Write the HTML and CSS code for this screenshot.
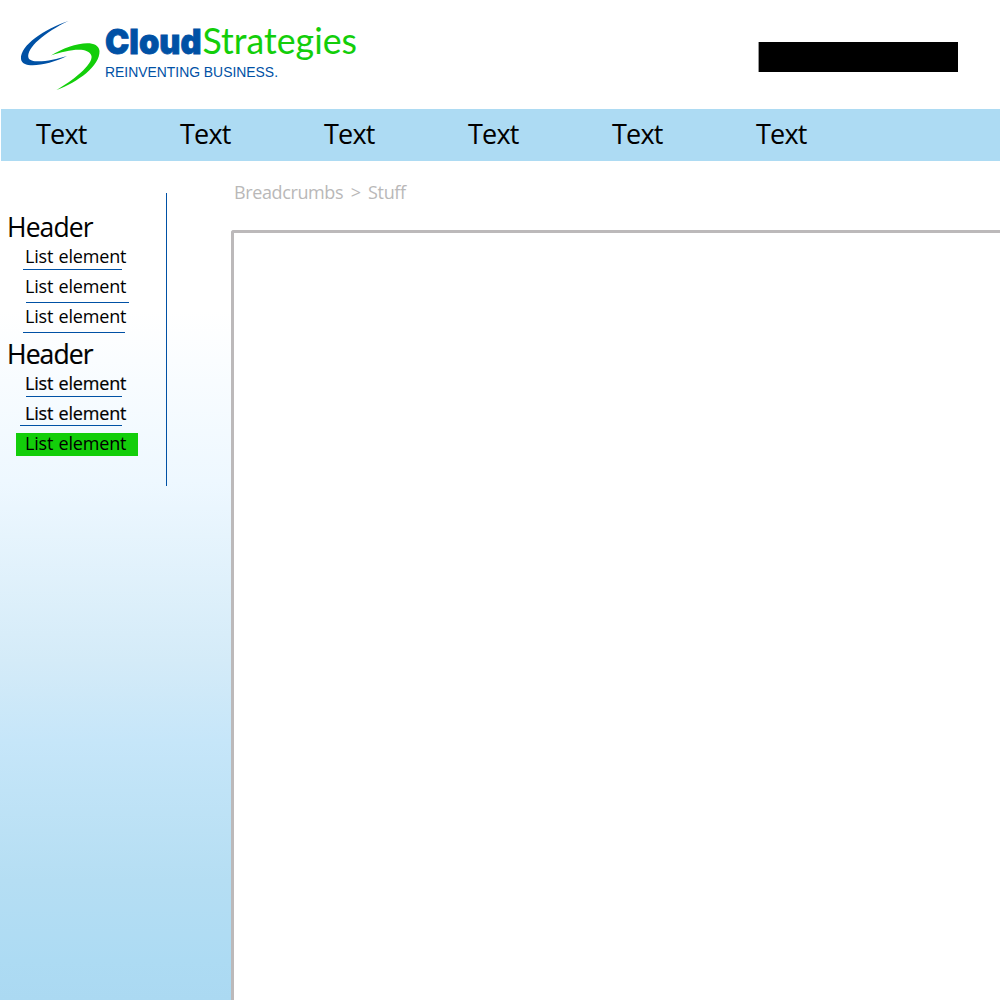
FILE: index.html
```html
<!DOCTYPE html>
<html lang="en">
<head>
<meta charset="utf-8">
<title>CloudStrategies</title>
<link rel="stylesheet" href="styles.css">
</head>
<body>
<div class="page">
  <header class="top">
    <svg class="logo" width="360" height="100" viewBox="0 0 360 100" role="img" aria-label="CloudStrategies">
      <path fill="#0051a5" d="M68.500 21C45 29 20 45 21 59C22 70 49 65 67 56C52 61 31 64 28.500 58C26 48 45 32 68.500 21Z"/>
      <path fill="#13ce0a" d="M51 55.500C69 44 98 37 99.500 51C100 66 78 82 56.500 90C72 81 93 65 91.500 56C88 46 68 50 51 55.500Z"/>
      <text class="logo-bold" x="105" y="53.800" textLength="96.500" lengthAdjust="spacingAndGlyphs">Cloud</text>
      <text class="logo-light" x="202.500" y="54.300" textLength="154.500" lengthAdjust="spacingAndGlyphs">Strategies</text>
      <text class="logo-tag" x="105" y="76.500" textLength="173" lengthAdjust="spacingAndGlyphs">REINVENTING BUSINESS.</text>
    </svg>
    <div class="search"></div>
  </header>
  <nav class="nav">
    <a>Text</a><a>Text</a><a>Text</a><a>Text</a><a>Text</a><a>Text</a>
  </nav>
  <div class="body">
    <aside class="side">
      <div class="menu">
        <h2>Header</h2>
        <ul>
          <li class="r1">List element</li>
          <li class="r2">List element</li>
          <li class="r3">List element</li>
        </ul>
        <h2 class="strong">Header</h2>
        <ul class="strong">
          <li class="r4">List element</li>
          <li class="r5">List element</li>
          <li class="active">List element</li>
        </ul>
      </div>
    </aside>
    <main class="main">
      <div class="crumbs">Breadcrumbs &gt; Stuff</div>
      <div class="panel"></div>
    </main>
  </div>
</div>
</body>
</html>
```
FILE: styles.css
```css
* { box-sizing: border-box; }
body { margin: 0; background: #fff; font-family: "Open Sans", "Noto Sans", sans-serif; color: #000; }
.page { height: 1000px; overflow: hidden; display: flex; flex-direction: column; }
.top { height: 109px; flex: none; display: flex; justify-content: space-between; }
.logo-bold { font: 900 34px Inter, sans-serif; fill: #0051a5; stroke: #0051a5; stroke-width: 0.8px; }
.logo-light { font: 400 36px Lato, sans-serif; fill: #13ce0a; }
.logo-tag { font: 14px "Liberation Sans", sans-serif; fill: #0051a5; }
.search { width: 200px; height: 30px; margin: 42px 42px 0 0; background: #000; border-left: 1px solid #999; }
.nav { height: 52px; flex: none; margin-left: 1px; padding-left: 35px; background: #addbf3; display: flex; }
.nav a { width: 144px; font-size: 27px; line-height: 50px; letter-spacing: -0.8px; }
.body { flex: 1; display: flex; min-height: 0; }
.side { width: 231px; flex: none; padding-top: 32px; background: linear-gradient(#fff 0, #fff 150px, #eef8ff 320px, #d4ebf8 500px, #c6e6f9 580px, #b5def3 720px, #addbf3 800px, #abd9f2 100%); }
.menu { width: 167px; height: 293px; padding-top: 15px; border-right: 1px solid #0051a5; }
h2 { height: 36px; margin: 0 0 0 7px; font-size: 26.5px; font-weight: 400; line-height: 38px; letter-spacing: -0.9px; }
ul { list-style: none; margin: 0 0 1px; padding: 0; }
li { height: 30px; padding-left: 25px; font-size: 18px; line-height: 24px; letter-spacing: -0.2px; word-spacing: 1px; white-space: nowrap; }
li::after { content: ""; display: block; height: 1px; background: #0051a5; }
.r1::after { margin: 1px 0 0 -2px; width: 99px; }
.r2::after { margin: 4px 0 0 1px; width: 103px; }
.r3::after { margin: 4px 0 0 -2px; width: 102px; }
.r4::after { margin: 1px 0 0 1px; width: 96px; }
.r5::after { margin: 0 0 0 -5px; width: 102px; }
.strong { -webkit-text-stroke: 0.2px #000; }
.active { height: 23px; margin: 2px 0 0 16px; width: 122px; padding-left: 9px; line-height: 20px; background: #13ce0a; -webkit-text-stroke: 0; }
.active::after { display: none; }
.main { flex: 1; display: flex; flex-direction: column; }
.crumbs { height: 69px; padding: 19px 0 0 3px; font-size: 18px; line-height: 24px; letter-spacing: -0.38px; word-spacing: 3.2px; color: #b9b8b8; }
.panel { flex: 1; border: solid #bcb9ba; border-width: 3px 0 0 3px; border-top-left-radius: 3px; background: #fff; }
```
